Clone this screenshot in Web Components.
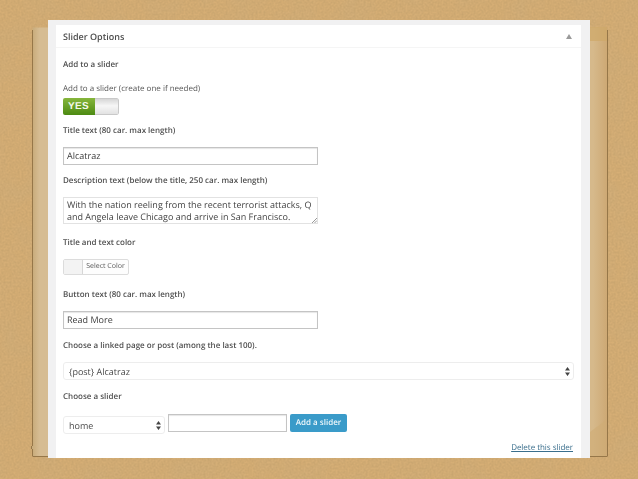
<!DOCTYPE html>
<html>
<head>
<meta charset="utf-8">
<style>
  html, body { margin: 0; height: 100%; background: #d4aa72; }
  body { font-family: "Open Sans", "Liberation Sans", sans-serif; overflow: hidden; text-rendering: geometricPrecision; }
</style>
</head>
<body>
<slide-stage>
  <options-panel heading="Slider Options">
    <field-label top="11">Add to a slider</field-label>
    <field-label top="12" light>Add to a slider (create one if needed)</field-label>
    <toggle-switch></toggle-switch>
    <field-label top="10">Title text (80 car. max length)</field-label>
    <text-field top="10" width="255">Alcatraz</text-field>
    <field-label top="10">Description text (below the title, 250 car. max length)</field-label>
    <text-area top="10">With the nation reeling from the recent terrorist attacks, Q and Angela leave Chicago and arrive in San Francisco.</text-area>
    <field-label top="13">Title and text color</field-label>
    <color-picker></color-picker>
    <field-label top="14">Button text (80 car. max length)</field-label>
    <text-field top="10" width="255">Read More</text-field>
    <field-label top="11">Choose a linked page or post (among the last 100).</field-label>
    <select-box top="10" width="511">{post} Alcatraz</select-box>
    <field-label top="11">Choose a slider</field-label>
    <action-row>
      <select-box top="2" width="102">home</select-box>
      <text-field width="119"></text-field>
      <wp-button>Add a slider</wp-button>
    </action-row>
    <delete-link>Delete this slider</delete-link>
  </options-panel>
</slide-stage>

<script>
function define(name, css, html, extra) {
  class El extends HTMLElement {
    constructor() {
      super();
      this.attachShadow({ mode: "open" }).innerHTML = `<style>${css}</style>${html}`;
    }
    connectedCallback() {
      if (this.hasAttribute("top")) this.style.marginTop = this.getAttribute("top") + "px";
      if (this.hasAttribute("width")) this.style.width = this.getAttribute("width") + "px";
      if (extra) extra.call(this);
    }
  }
  customElements.define(name, El);
}

define("slide-stage", `
  :host { display: block; position: relative; width: 638px; height: 479px; box-sizing: border-box; padding: 20px 48px 21px; overflow: hidden; }
  .grain { position: absolute; inset: 0; width: 100%; height: 100%; }
  .paper { position: absolute; left: 0; top: 0; width: 100%; height: 100%; }
  .slot { position: relative; display: block; height: 100%; }
`, `
  <svg class="grain" aria-hidden="true">
    <filter id="n"><feTurbulence type="fractalNoise" baseFrequency="0.5" numOctaves="3" seed="4"/>
      <feColorMatrix values="0 0 0 0 0.5  0 0 0 0 0.33  0 0 0 0 0.14  0.9 0 0 0 -0.24"/></filter>
    <filter id="b"><feTurbulence type="fractalNoise" baseFrequency="0.035" numOctaves="2" seed="9"/>
      <feColorMatrix values="0 0 0 0 0.62  0 0 0 0 0.42  0 0 0 0 0.2  1.1 0 0 0 -0.42"/></filter>
    <rect width="100%" height="100%" fill="#d6ae75"/>
    <rect width="100%" height="100%" filter="url(#b)"/>
    <rect width="100%" height="100%" filter="url(#n)"/>
  </svg>
  <svg class="paper" aria-hidden="true" viewBox="0 0 638 479">
    <defs>
      <linearGradient id="p" x1="0" x2="1" y1="0" y2="0">
        <stop offset="0" stop-color="#c8ab7a"/><stop offset=".012" stop-color="#d6bc92"/>
        <stop offset=".975" stop-color="#d6b98b"/><stop offset="1" stop-color="#cda873"/>
      </linearGradient>
      <filter id="torn" x="-2%" y="-2%" width="104%" height="104%">
        <feTurbulence type="fractalNoise" baseFrequency="0.07" numOctaves="2" seed="3" result="t"/>
        <feDisplacementMap in="SourceGraphic" in2="t" scale="1.500"/>
      </filter>
    </defs>
    <g filter="url(#torn)">
      <rect x="32.500" y="27.500" width="575" height="429" fill="url(#p)"/>
      <path d="M32.500 30V456M607.500 30V456M32.500 456.500H607.500" stroke="#96774a" fill="none"/>
    </g>
    <rect x="590" y="27" width="17" height="14" fill="#cfa868" opacity=".7"/>
    <path d="M590 456V432L606 420V456Z" fill="#cfab74" opacity=".6"/>
  </svg>
  <div class="slot"><slot></slot></div>
`);

define("options-panel", `
  :host { display: block; height: 100%; box-sizing: border-box; background: #f1f1f2; padding: 5px 9px 0 8px; }
  .box { background: #fff; height: 100%; display: flex; flex-direction: column; }
  header { height: 22px; flex: none; display: flex; align-items: center; justify-content: space-between; padding: 0 9px 0 7px;
    border-bottom: 1px solid #f5f5f5; font-size: 9px; font-weight: 600; color: #4c4c4c; filter: blur(.25px); }
  header svg { width: 6px; height: 5px; }
  .body { flex: 1; padding: 0 7px; display: flex; flex-direction: column; align-items: flex-start; filter: blur(.3px); }
`, `
  <div class="box">
    <header><span id="h"></span><svg viewBox="0 0 6 5"><path d="M3 0 6 5H0z" fill="#9a9a9a"/></svg></header>
    <div class="body"><slot></slot></div>
  </div>
`, function () {
  this.shadowRoot.getElementById("h").textContent = this.getAttribute("heading");
});

define("field-label", `
  :host { display: block; font-size: 8px; line-height: 12px; font-weight: 600; color: #4f4f4f; white-space: nowrap; }
  :host([light]) { font-weight: 400; color: #555; }
`, `<slot></slot>`);

define("toggle-switch", `
  :host { display: flex; width: 56px; height: 17px; margin-top: 3px; border-radius: 2px; overflow: hidden; box-sizing: border-box; }
  .on { width: 32px; background: linear-gradient(#86b63c, #4c8a12); color: #f4f8ea; font: 700 10px/17px "Liberation Sans", sans-serif; padding-left: 5px; box-sizing: border-box; letter-spacing: .3px; }
  .off { flex: 1; background: linear-gradient(#d6d6d6, #f6f6f6 45%, #e2e2e2); border: 1px solid #c9c9c9; border-left: 0; border-radius: 0 2px 2px 0; }
`, `<div class="on">YES</div><div class="off"></div>`);

define("text-field", `
  :host { display: block; height: 18px; box-sizing: border-box; border: 1px solid #c4c4c4; box-shadow: inset 0 1px 1px #e6e6e6; background: #fff;
    font-size: 9px; line-height: 16px; padding: 0 3px; color: #3d3d3d; white-space: nowrap; }
`, `<slot></slot>`);

define("text-area", `
  :host { display: block; position: relative; width: 255px; height: 27px; box-sizing: border-box; border: 1px solid #e2e2e2; background: #fff;
    font-size: 9px; line-height: 12px; padding: 1px 3px; color: #444; overflow: hidden; }
  svg { position: absolute; right: 0; bottom: 0; width: 6px; height: 6px; }
`, `<slot></slot><svg viewBox="0 0 6 6"><path d="M1 6 6 1M3.500 6 6 3.500" stroke="#999" fill="none"/></svg>`);

define("color-picker", `
  :host { display: flex; width: 66px; height: 16px; margin-top: 10px; box-sizing: border-box; border: 1px solid #dcdcdc; border-radius: 2px; background: #fdfdfd; }
  .swatch { width: 18px; background: #f3f3f3; border-right: 1px solid #d6d6d6; }
  .txt { flex: 1; text-align: center; font-size: 7px; line-height: 14px; color: #5a5a5a; white-space: nowrap; }
`, `<div class="swatch"></div><div class="txt">Select Color</div>`);

define("select-box", `
  :host { display: flex; align-items: center; justify-content: space-between; height: 18px; box-sizing: border-box; border: 1px solid #ededed; border-radius: 3px; background: #fff;
    font-size: 9px; padding: 0 3px 0 5px; color: #4a4a4a; white-space: nowrap; }
  svg { width: 5px; height: 9px; flex: none; }
`, `<span><slot></slot></span><svg viewBox="0 0 5 9"><path d="M2.500 0 5 3.500H0zM2.500 9 5 5.500H0z" fill="#444"/></svg>`);

define("action-row", `
  :host { display: flex; align-items: flex-start; gap: 3px; margin-top: 11px; }
`, `<slot></slot>`);

define("wp-button", `
  :host { display: block; width: 57px; height: 18px; box-sizing: border-box; background: #3a9bc9; border-radius: 2px; color: #eef7fb;
    font-size: 8px; font-weight: 600; line-height: 18px; text-align: center; white-space: nowrap; }
`, `<slot></slot>`);

define("delete-link", `
  :host { display: block; align-self: flex-end; margin: 8px 1px 0 0; font-size: 8px; line-height: 12px; color: #3a6e8c; text-decoration: underline; white-space: nowrap; letter-spacing: -.03px; }
`, `<slot></slot>`);
</script>
</body>
</html>
